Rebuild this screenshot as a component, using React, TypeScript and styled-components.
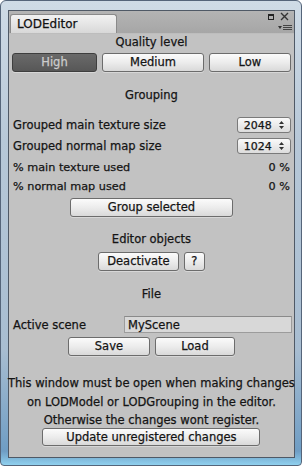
import * as React from "react";
import styled, { createGlobalStyle } from "styled-components";

const GlobalStyle = createGlobalStyle`
    html, body { margin: 0; padding: 0; }
    body {
        width: 302px;
        height: 466px;
        overflow: hidden;
        font-family: "DejaVu Sans", "Liberation Sans", sans-serif;
        color: #141414;
        -webkit-text-stroke: 0.25px currentColor;
    }
`;

// outer vista-ish window frame
const Frame = styled.div`
    box-sizing: border-box;
    width: 302px;
    height: 466px;
    padding: 9px 9px 7px 7px;
    border: 1px solid #55657a;
    border-radius: 6px 6px 4px 4px;
    background: linear-gradient(180deg, #cfdbe6 0%, #b7c8d8 30%, #a8bdd1 75%, #6f9dc4 97%, #8fd0ee 100%);
    display: flex;
`;

const Panel = styled.div`
    flex: 1;
    display: flex;
    flex-direction: column;
    border: 1px solid #4f5966;
    background: #c2c2c2;
`;

const TabBar = styled.div`
    height: 22px;
    display: flex;
    align-items: flex-end;
    justify-content: space-between;
    background: linear-gradient(180deg, #b4b4b4 0%, #a6a6a6 100%);
    border-bottom: 1px solid #bdbdbd;
`;

const Tab = styled.div`
    box-sizing: border-box;
    width: 107px;
    height: 19px;
    margin-left: 1px;
    padding: 2px 0 0 6px;
    border: 1px solid #8a8a8a;
    border-bottom: none;
    border-radius: 3px 3px 0 0;
    background: linear-gradient(180deg, #f2f2f2 0%, #d8d8d8 100%);
    font-size: 12px;
    color: #111;
`;

const WindowIcons = styled.div`
    display: grid;
    grid-template-columns: 14px 14px;
    grid-template-rows: 11px 11px;
    margin-right: 2px;
    align-items: center;
    justify-items: center;
`;

const Content = styled.div`
    flex: 1;
    display: flex;
    flex-direction: column;
    padding: 0 3px 0 3px;
`;

const Title = styled.div<{ top: number }>`
    height: 17px;
    line-height: 17px;
    margin-top: ${p => p.top}px;
    text-align: center;
    font-size: 11.5px;
`;

const Row = styled.div<{ top: number, h?: number }>`
    display: flex;
    align-items: center;
    justify-content: space-between;
    height: ${p => p.h ?? 16}px;
    margin-top: ${p => p.top}px;
    font-size: 11.5px;
`;

const SmallRow = styled(Row)`
    font-size: 11.25px;
    padding-right: 1px;
`;

const ButtonRow = styled.div<{ top: number }>`
    display: flex;
    justify-content: center;
    gap: 5px;
    margin-top: ${p => p.top}px;
`;

const QualityRow = styled.div`
    display: grid;
    grid-template-columns: 85px 102px 1fr;
    gap: 5px;
    margin-top: 2px;
`;

const Button = styled.button<{ w?: number, active?: boolean }>`
    box-sizing: border-box;
    height: 19px;
    width: ${p => (p.w ? `${p.w}px` : "auto")};
    padding: 0;
    font-family: inherit;
    font-size: 11.5px;
    line-height: 17px;
    color: ${p => (p.active ? "#cdcdcd" : "#141414")};
    border: 1px solid ${p => (p.active ? "#3e3e3e" : "#6c6c6c")};
    border-radius: 3px;
    background: ${p => (p.active
        ? "linear-gradient(180deg, #6a6a6a 0%, #575757 100%)"
        : "linear-gradient(180deg, #fbfbfb 0%, #ececec 50%, #d9d9d9 100%)")};
    box-shadow: 0 1px 0 rgba(255,255,255,0.35);
`;

const Popup = styled.div`
    box-sizing: border-box;
    width: 54px;
    height: 16px;
    display: flex;
    align-items: center;
    justify-content: space-between;
    padding: 0 6px 0 6px;
    border: 1px solid #7a7a7a;
    border-radius: 3px;
    background: linear-gradient(180deg, #fafafa 0%, #dcdcdc 100%);
    font-size: 11px;
`;

const Label = styled.span`
    padding-left: 1px;
`;

const SceneRow = styled.div`
    display: grid;
    grid-template-columns: 112px 1fr;
    align-items: center;
    height: 17px;
    margin-top: 13px;
    font-size: 11.5px;
`;

const SceneInput = styled.div`
    box-sizing: border-box;
    height: 17px;
    margin-right: -1px;
    padding: 1px 0 0 3px;
    border: 1px solid #9c9c9c;
    border-top-color: #8a8a8a;
    background: #d8d8d8;
    font-size: 11.5px;
`;

const Note = styled.div`
    margin-top: 18px;
    text-align: center;
    font-size: 11.5px;
    line-height: 18.5px;
    margin-left: -4px;
    margin-right: -4px;
    white-space: nowrap;
`;

const UpdateRow = styled(ButtonRow)`
    margin-top: -2px;
`;

const Arrows = () => (
    <svg width="5" height="8" viewBox="0 0 5 8">
        <path d="M2.5 0 L5 3 L0 3 Z M2.5 8 L5 5 L0 5 Z" fill="#333"/>
    </svg>
);

const Popdown: React.FC<{ value: string }> = ({ value }) => (
    <Popup>
        <span>{value}</span>
        <Arrows/>
    </Popup>
);

const App: React.FC = () => {
    return (
        <React.Fragment>
            <GlobalStyle/>
            <Frame>
                <Panel>
                    <TabBar>
                        <Tab>LODEditor</Tab>
                        <WindowIcons>
                            <svg width="6" height="6" viewBox="0 0 6 6">
                                <rect x="0.5" y="0.5" width="5" height="5" fill="none" stroke="#222" strokeWidth="1"/>
                                <rect x="0" y="0" width="6" height="2" fill="#222"/>
                            </svg>
                            <svg width="9" height="9" viewBox="0 0 9 9">
                                <path d="M1 1 L8 8 M8 1 L1 8" stroke="#333" strokeWidth="1.4"/>
                            </svg>
                            <span/>
                            <svg width="14" height="7" viewBox="0 0 14 7">
                                <path d="M0 2 L4 2 L2 5 Z" fill="#333"/>
                                <path d="M5 1.5 H14 M5 3.5 H14 M5 5.5 H14" stroke="#444" strokeWidth="1"/>
                            </svg>
                        </WindowIcons>
                    </TabBar>
                    <Content>
                        <Title top={0}>Quality level</Title>
                        <QualityRow>
                            <Button active>High</Button>
                            <Button>Medium</Button>
                            <Button>Low</Button>
                        </QualityRow>

                        <Title top={15}>Grouping</Title>
                        <Row top={13}>
                            <Label>Grouped main texture size</Label>
                            <Popdown value="2048"/>
                        </Row>
                        <Row top={5}>
                            <Label>Grouped normal map size</Label>
                            <Popdown value="1024"/>
                        </Row>
                        <SmallRow top={5}>
                            <Label>% main texture used</Label>
                            <span>0 %</span>
                        </SmallRow>
                        <SmallRow top={3}>
                            <Label>% normal map used</Label>
                            <span>0 %</span>
                        </SmallRow>
                        <ButtonRow top={4}>
                            <Button w={163}>Group selected</Button>
                        </ButtonRow>

                        <Title top={14}>Editor objects</Title>
                        <ButtonRow top={4}>
                            <Button w={81}>Deactivate</Button>
                            <Button w={21}>?</Button>
                        </ButtonRow>

                        <Title top={15}>File</Title>
                        <SceneRow>
                            <Label>Active scene</Label>
                            <SceneInput>MyScene</SceneInput>
                        </SceneRow>
                        <ButtonRow top={4}>
                            <Button w={82}>Save</Button>
                            <Button w={80}>Load</Button>
                        </ButtonRow>

                        <Note>
                            This window must be open when making changes<br/>
                            on LODModel or LODGrouping in the editor.<br/>
                            Otherwise the changes wont register.
                        </Note>
                        <UpdateRow top={0}>
                            <Button w={218} style={{ height: 18 }}>Update unregistered changes</Button>
                        </UpdateRow>
                    </Content>
                </Panel>
            </Frame>
        </React.Fragment>
    );
};

export default App;
